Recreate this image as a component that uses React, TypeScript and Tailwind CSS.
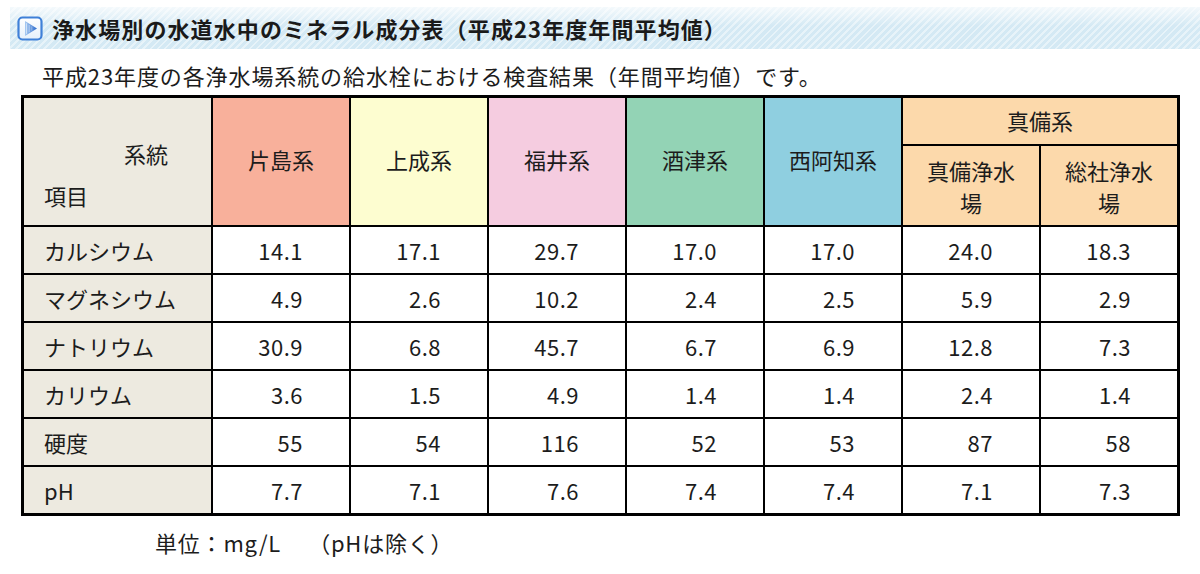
import React from "react";

const font = { fontFamily: '"Noto Sans CJK JP", "Noto Sans", sans-serif' };

type Row = { name: string; values: string[] };

const rows: Row[] = [
  { name: "カルシウム", values: ["14.1", "17.1", "29.7", "17.0", "17.0", "24.0", "18.3"] },
  { name: "マグネシウム", values: ["4.9", "2.6", "10.2", "2.4", "2.5", "5.9", "2.9"] },
  { name: "ナトリウム", values: ["30.9", "6.8", "45.7", "6.7", "6.9", "12.8", "7.3"] },
  { name: "カリウム", values: ["3.6", "1.5", "4.9", "1.4", "1.4", "2.4", "1.4"] },
  { name: "硬度", values: ["55", "54", "116", "52", "53", "87", "58"] },
  { name: "pH", values: ["7.7", "7.1", "7.6", "7.4", "7.4", "7.1", "7.3"] },
];

function TitleIcon() {
  return (
    <svg width="26" height="25" viewBox="0 0 26 25">
      <defs>
        <linearGradient id="bgIcon" x1="0" y1="0" x2="0" y2="1">
          <stop offset="0" stopColor="#ffffff" />
          <stop offset="1" stopColor="#e6f0fb" />
        </linearGradient>
        <linearGradient id="triIcon" x1="0" y1="0" x2="1" y2="0">
          <stop offset="0" stopColor="#a9cbf2" />
          <stop offset="1" stopColor="#2c6bcd" />
        </linearGradient>
      </defs>
      <rect x="1.5" y="1.5" width="23" height="22" rx="4" fill="url(#bgIcon)" stroke="#3f80d8" strokeWidth="2.2" />
      <polygon points="8,5 20,12.5 8,20" fill="url(#triIcon)" />
      <line x1="9.6" y1="7.2" x2="9.6" y2="17.8" stroke="#ffffff" strokeWidth="0.8" opacity="0.75" />
      <line x1="12.2" y1="8.8" x2="12.2" y2="16.2" stroke="#ffffff" strokeWidth="0.8" opacity="0.55" />
      <line x1="14.8" y1="10.4" x2="14.8" y2="14.6" stroke="#ffffff" strokeWidth="0.8" opacity="0.4" />
    </svg>
  );
}

export default function App() {
  const colors = [
    "bg-[#f8b09b]",
    "bg-[#fdfdd0]",
    "bg-[#f5cce0]",
    "bg-[#93d3b5]",
    "bg-[#8fcfe0]",
  ];
  const names = ["片島系", "上成系", "福井系", "酒津系", "西阿知系"];
  return (
    <div className="w-[1200px] h-[574px] bg-white text-[#1c1c1c] overflow-hidden" style={font}>
      <div className="ml-[10px] mt-[7px] h-[42px] flex items-center bg-[linear-gradient(to_bottom,rgba(255,255,255,0.75),rgba(255,255,255,0)_45%),repeating-linear-gradient(135deg,#d4e9f4_0px,#d4e9f4_3px,#e7f3f9_3px,#e7f3f9_5px)]">
        <div className="ml-[7px] mr-[9px] flex items-center">
          <TitleIcon />
        </div>
        <div className="text-[22px] font-bold leading-none tracking-[1.1px] text-[#1a1a1a]">
          浄水場別の水道水中のミネラル成分表（平成23年度年間平均値）
        </div>
      </div>
      <div className="mt-[11px] pl-[42px] text-[22px] leading-[30px] tracking-[0.9px]">
        平成23年度の各浄水場系統の給水栓における検査結果（年間平均値）です。
      </div>
      <table className="mt-[5px] ml-[21px] w-[1159px] table-fixed border-separate border-spacing-0 border-[3px] border-black text-[22px]">
        <colgroup>
          <col className="w-[189px]" />
          <col className="w-[138px]" />
          <col className="w-[138px]" />
          <col className="w-[138px]" />
          <col className="w-[138px]" />
          <col className="w-[138px]" />
          <col className="w-[138px]" />
          <col className="w-[136px]" />
        </colgroup>
        <thead>
          <tr>
            <th
              rowSpan={2}
              className="bg-[#edeae0] border-r-2 border-b-2 border-black align-top p-0 font-normal text-left"
            >
              <div className="pt-[34px] leading-[42px]">
                <div className="pl-[100px]">系統</div>
                <div className="pl-[20px]">項目</div>
              </div>
            </th>
            {names.map((n, i) => (
              <th
                key={n}
                rowSpan={2}
                className={`${colors[i]} border-r-2 border-b-2 border-black font-normal text-center align-middle p-0 pb-[6px] leading-[30px]`}
              >
                {n}
              </th>
            ))}
            <th
              colSpan={2}
              className="bg-[#fcd9ab] border-b-2 border-black font-normal text-center align-middle p-0 pb-[2px] h-[48px] leading-[30px]"
            >
              真備系
            </th>
          </tr>
          <tr>
            <th className="bg-[#fcd9ab] border-r-2 border-b-2 border-black font-normal text-center align-middle px-[20px] py-0 h-[81px] leading-[32px]">
              真備浄水場
            </th>
            <th className="bg-[#fcd9ab] border-b-2 border-black font-normal text-center align-middle px-[20px] py-0 h-[81px] leading-[32px]">
              総社浄水場
            </th>
          </tr>
        </thead>
        <tbody>
          {rows.map((r, ri) => {
            const last = ri === rows.length - 1;
            return (
              <tr key={r.name}>
                <td
                  className={`bg-[#edeae0] border-r-2 border-black pl-[20px] p-0 text-left align-middle leading-[30px] ${
                    last ? "h-[46px]" : "h-[48px] border-b-2"
                  }`}
                >
                  {r.name}
                </td>
                {r.values.map((v, vi) => (
                  <td
                    key={vi}
                    className={`bg-white border-black text-right pr-[46px] align-middle leading-[30px] tracking-[0.5px] ${
                      vi === r.values.length - 1 ? "" : "border-r-2"
                    } ${last ? "h-[46px]" : "h-[48px] border-b-2"}`}
                  >
                    {v}
                  </td>
                ))}
              </tr>
            );
          })}
        </tbody>
      </table>
      <div className="mt-[11px] pl-[155px] text-[22px] leading-[30px] tracking-[0.8px] flex">
        <span>単位：mg/L</span>
        <span className="ml-[27px]">（pHは除く）</span>
      </div>
    </div>
  );
}
